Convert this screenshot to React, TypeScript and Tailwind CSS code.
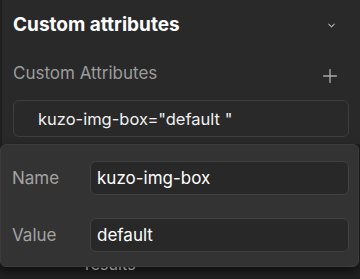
import { ChevronDown, Plus } from "lucide-react";

const fields = [
  { label: "Name", value: "kuzo-img-box" },
  { label: "Value", value: "default" },
];

const App = () => {
  return (
    <div className="w-[360px] h-[279px] overflow-hidden bg-[#1f1f1f] font-['Inter',sans-serif]">
      <div className="ml-[2px] bg-[#292929] pb-[7px]">
        {/* Section header */}
        <div className="flex items-center justify-between pl-[11px] pr-[23px] pt-[3px] h-[46px]">
          <h2 className="text-[19px] font-bold text-white leading-[24px]">Custom attributes</h2>
          <ChevronDown className="w-[11px] h-[11px] text-[#b5b5b5] mt-[2px]" strokeWidth={2.2} />
        </div>

        {/* Label + add */}
        <div className="flex items-center justify-between pl-[11px] pr-[19px] mt-[15px] h-[24px]">
          <span className="text-[17px] text-[#9c9c9c] leading-[24px]">Custom Attributes</span>
          <Plus className="w-[22px] h-[22px] text-[#a8a8a8] mt-[6px]" strokeWidth={1.5} />
        </div>

        {/* Attribute chip */}
        <div className="ml-[11px] mr-[11px] mt-[15px] h-[37px] rounded-[6px] border border-[#3e3e3e] flex items-center pl-[24px]">
          <span className="text-[16.5px] text-[#f0f0f0] leading-[24px]">kuzo-img-box="default "</span>
        </div>
      </div>

      {/* Edit popover */}
      <div className="relative z-10 w-[359px] h-[123px] rounded-[6px] border border-[#3c3c3c] bg-[#333333] shadow-[0_4px_8px_rgba(0,0,0,0.5)] pt-[16px] pr-[9px] flex flex-col gap-[23px]">
        {fields.map((f) => (
          <div key={f.label} className="flex items-center">
            <span className="w-[89px] pl-[11px] text-[17px] text-[#a3a3a3] leading-[24px]">{f.label}</span>
            <div className="flex-1 h-[34px] rounded-[6px] border border-[#414141] bg-[#282828] flex items-center pl-[6px]">
              <span className="text-[17px] text-white leading-[24px]">{f.value}</span>
            </div>
          </div>
        ))}
      </div>

      {/* Content behind the popover */}
      <div className="relative -mt-[15px] ml-[2px] pl-[83px]">
        <span className="text-[16px] text-[#d8d8d8] leading-[20px]">results</span>
      </div>
    </div>
  );
};

export default App;
